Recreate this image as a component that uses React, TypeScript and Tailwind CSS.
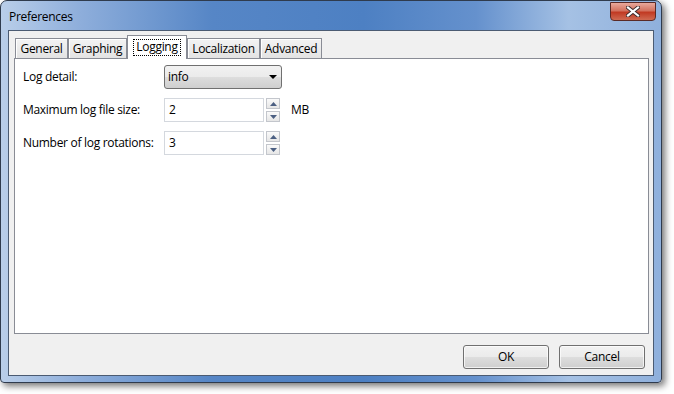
import React from "react";

const tabs = [
  { name: "General", w: "w-[53px]" },
  { name: "Graphing", w: "w-[59px]" },
  { name: "Logging", w: "w-[60px]", active: true },
  { name: "Localization", w: "w-[73px]" },
  { name: "Advanced", w: "w-[62px]" },
];

function CloseGlyph() {
  return (
    <svg width="14" height="11" viewBox="0 0 14 11">
      <path d="M2 1.5 L12 9.5 M12 1.5 L2 9.5" stroke="#3a2a2a" strokeWidth="4" strokeLinecap="square" />
      <path d="M2 1.5 L12 9.5 M12 1.5 L2 9.5" stroke="#ffffff" strokeWidth="2.2" strokeLinecap="square" />
    </svg>
  );
}

function Arrow({ up }: { up?: boolean }) {
  return (
    <svg width="7" height="4" viewBox="0 0 7 4">
      <path d={up ? "M0 4 L3.5 0 L7 4 Z" : "M0 0 L7 0 L3.5 4 Z"} fill="#4b5f82" />
    </svg>
  );
}

function SpinBox({ value }: { value: string }) {
  return (
    <div className="flex items-center">
      <div className="flex h-[24px] w-[100px] items-center border border-[#d4d8de] bg-white pl-[4px] text-black">
        {value}
      </div>
      <div className="ml-[2px] flex h-[24px] w-[14px] flex-col justify-between">
        <div className="flex h-[11px] items-center justify-center border border-[#c3c6cc] bg-gradient-to-b from-[#fafafa] to-[#e6e6e6]">
          <Arrow up />
        </div>
        <div className="flex h-[11px] items-center justify-center border border-[#c3c6cc] bg-gradient-to-b from-[#fafafa] to-[#e6e6e6]">
          <Arrow />
        </div>
      </div>
    </div>
  );
}

function DialogButton({ label }: { label: string }) {
  return (
    <div className="flex h-[24px] w-[86px] items-center justify-center rounded-[3px] border border-[#707070] bg-[linear-gradient(180deg,#f2f2f2_0%,#ebebeb_48%,#dddddd_52%,#cfcfcf_100%)] text-black shadow-[inset_0_0_0_1px_rgba(255,255,255,0.7)]">
      {label}
    </div>
  );
}

export default function App() {
  return (
    <div className="h-[394px] w-[674px] bg-white font-['Open_Sans',sans-serif] text-[12px] leading-none tracking-[-0.3px]">
      <div className="flex h-[383px] w-[662px] flex-col rounded-t-[7px] rounded-b-[4px] border border-[#2f3b4d] bg-[linear-gradient(90deg,#b9cee9_0%,#8eaedb_12%,#5686c6_32%,#4d80c3_55%,#6591cd_72%,#a5c1e4_86%,#8fb0dc_100%)] shadow-[3px_3px_7px_rgba(0,0,0,0.55)]">
        <div className="flex h-[29px] items-start justify-between">
          <span className="pl-[8px] pt-[10px] text-[12px] text-black">Preferences</span>
          <div className="mr-[5px] mt-[1px] flex h-[19px] w-[46px] items-center justify-center rounded-b-[4px] border border-[#5a2a26] bg-[linear-gradient(180deg,#e9a99c_0%,#d3725f_45%,#c13a23_55%,#cf6a52_100%)]">
            <CloseGlyph />
          </div>
        </div>
        <div className="flex-1 px-[7px] pb-[6px]">
          <div className="flex h-full flex-col border border-[#4b5b72] bg-[#f0f0f0]">
            <div className="ml-[5px] mr-[4px] mt-[4px] flex flex-col">
              <div className="flex h-[23px] items-end pl-[1px]">
                {tabs.map((t) =>
                  t.active ? (
                    <div
                      key={t.name}
                      className={`relative z-10 -mb-px flex h-[24px] ${t.w} items-start justify-center border border-b-0 border-[#898c95] bg-white pt-[3px]`}
                    >
                      <span className="border border-dotted border-black px-[2px] pb-[2px] pt-[1px] text-black">
                        {t.name}
                      </span>
                    </div>
                  ) : (
                    <div
                      key={t.name}
                      className={`flex h-[20px] ${t.w} items-center justify-center border border-b-0 border-[#898c95] bg-gradient-to-b from-[#f3f3f3] to-[#e3e3e3] text-black shadow-[inset_1px_1px_0_#ffffff]`}
                    >
                      {t.name}
                    </div>
                  )
                )}
              </div>
              <div className="flex h-[276px] flex-col gap-[9px] border border-[#898c95] bg-white pl-[8px] pt-[6px]">
                <div className="flex h-[24px] items-center">
                  <span className="w-[141px] text-black">Log detail:</span>
                  <div className="flex h-[24px] w-[118px] items-center justify-between rounded-[3px] border border-[#707070] bg-[linear-gradient(180deg,#f2f2f2_0%,#ebebeb_48%,#dddddd_52%,#cfcfcf_100%)] pl-[3px] pr-[4px] text-black">
                    <span>info</span>
                    <svg width="8" height="4" viewBox="0 0 8 4">
                      <path d="M0 0 L8 0 L4 4 Z" fill="#000" />
                    </svg>
                  </div>
                </div>
                <div className="flex h-[24px] items-center">
                  <span className="w-[141px] text-black">Maximum log file size:</span>
                  <SpinBox value="2" />
                  <span className="ml-[11px] text-black">MB</span>
                </div>
                <div className="flex h-[24px] items-center">
                  <span className="w-[141px] text-black">Number of log rotations:</span>
                  <SpinBox value="3" />
                </div>
              </div>
            </div>
            <div className="mr-[8px] mt-[11px] flex justify-end gap-[10px]">
              <DialogButton label="OK" />
              <DialogButton label="Cancel" />
            </div>
          </div>
        </div>
      </div>
    </div>
  );
}
